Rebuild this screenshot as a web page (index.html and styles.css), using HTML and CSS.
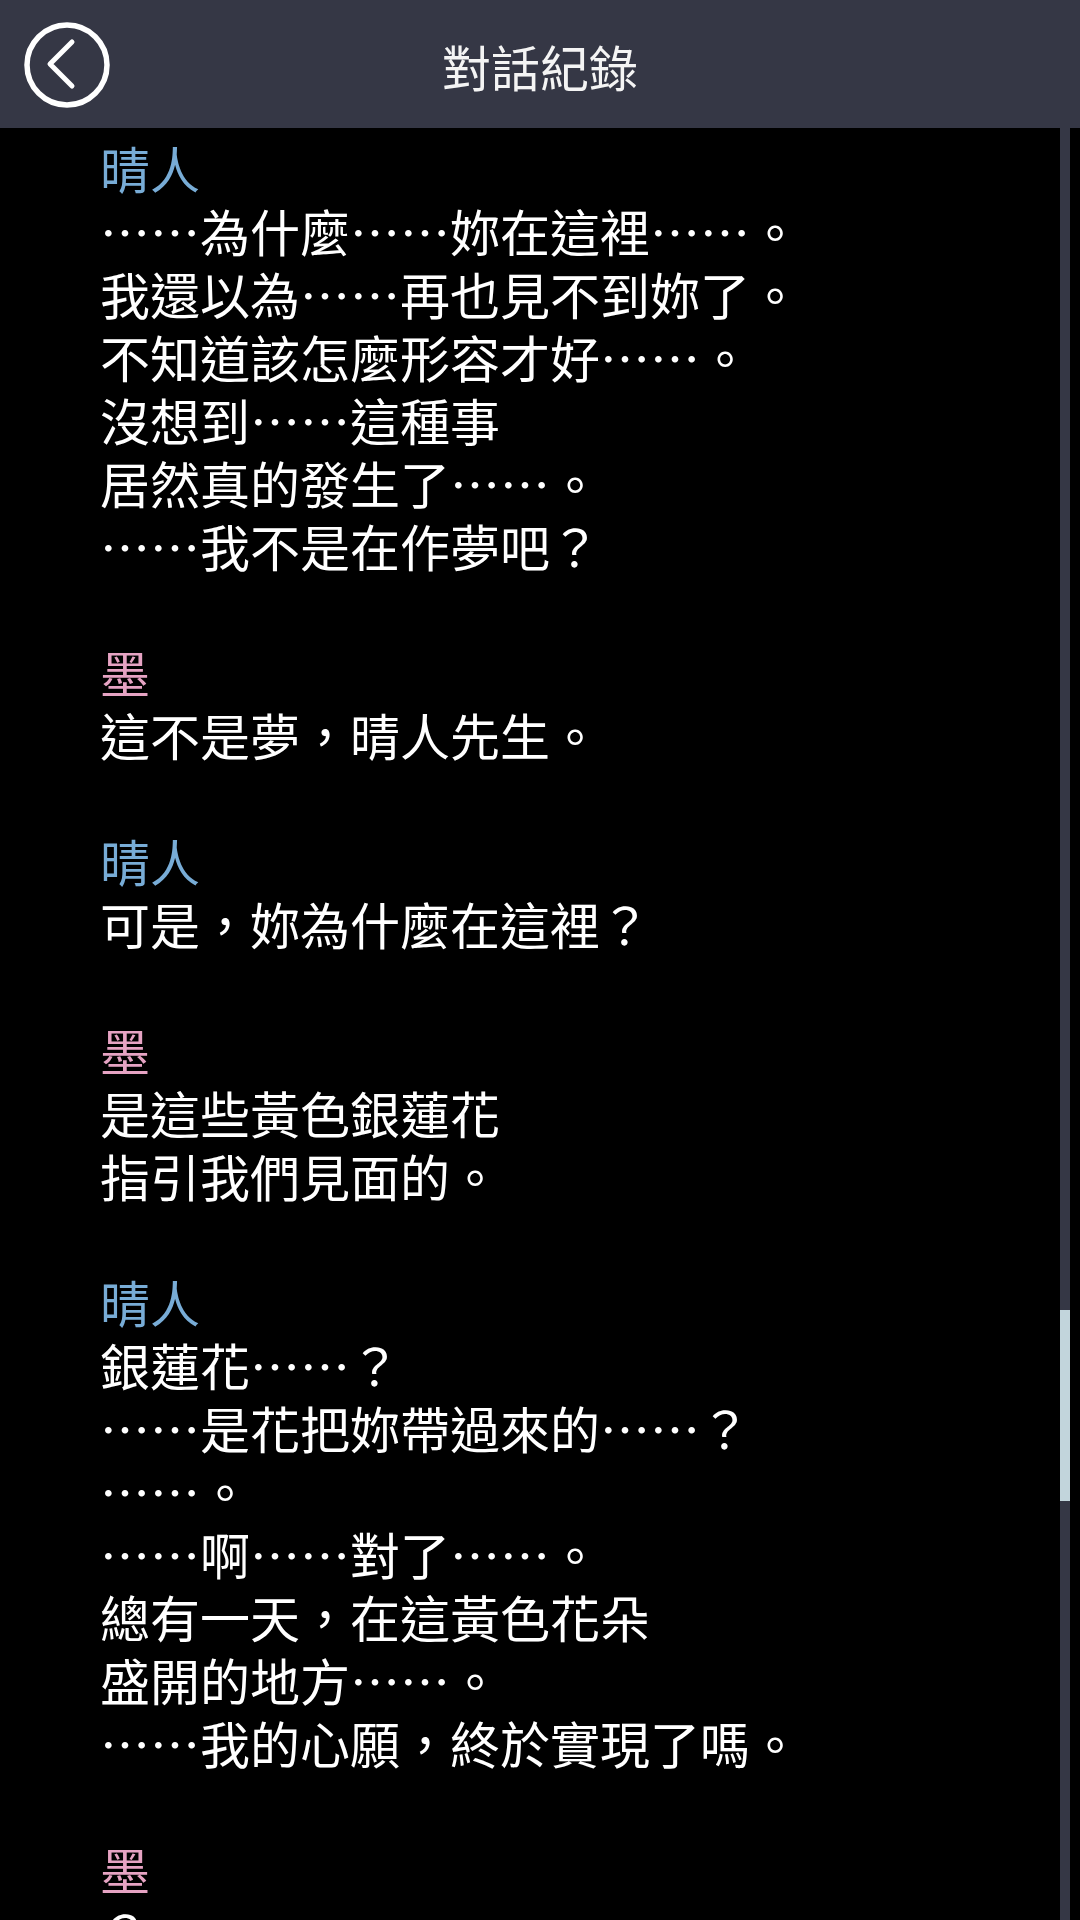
FILE: index.html
```html
<!DOCTYPE html>
<html lang="zh-Hant">
    <head>
        <meta charset="UTF-8">
        <title>對話紀錄</title>
        <link rel="stylesheet" href="styles.css">
    </head>
    <body>
        <div class="screen">
            <header class="topbar">
                <button class="back" type="button" aria-label="返回">
                    <svg width="90" height="90" viewBox="0 0 90 90">
                        <circle cx="45" cy="45" r="40" fill="none" stroke="#fff" stroke-width="5.5"/>
                        <polyline points="50,22 28,44 50,66" fill="none" stroke="#fff" stroke-width="5" stroke-linecap="round" stroke-linejoin="round"/>
                    </svg>
                </button>
                <h1 class="title">對話紀錄</h1>
                <div class="spacer"></div>
            </header>
            <div class="main">
                <div class="log">
                    <div class="entry">
                        <div class="name qing">晴人</div>
                        <p class="line">……為什麼……妳在這裡……。</p>
                        <p class="line">我還以為……再也見不到妳了。</p>
                        <p class="line">不知道該怎麼形容才好……。</p>
                        <p class="line">沒想到……這種事</p>
                        <p class="line">居然真的發生了……。</p>
                        <p class="line">……我不是在作夢吧？</p>
                    </div>
                    <div class="entry">
                        <div class="name mo">墨</div>
                        <p class="line">這不是夢，晴人先生。</p>
                    </div>
                    <div class="entry">
                        <div class="name qing">晴人</div>
                        <p class="line">可是，妳為什麼在這裡？</p>
                    </div>
                    <div class="entry">
                        <div class="name mo">墨</div>
                        <p class="line">是這些黃色銀蓮花</p>
                        <p class="line">指引我們見面的。</p>
                    </div>
                    <div class="entry">
                        <div class="name qing">晴人</div>
                        <p class="line">銀蓮花……？</p>
                        <p class="line">……是花把妳帶過來的……？</p>
                        <p class="line">……。</p>
                        <p class="line">……啊……對了……。</p>
                        <p class="line">總有一天，在這黃色花朵</p>
                        <p class="line">盛開的地方……。</p>
                        <p class="line">……我的心願，終於實現了嗎。</p>
                    </div>
                    <div class="entry">
                        <div class="name mo">墨</div>
                        <p class="line">？</p>
                    </div>
                </div>
                <div class="scroll-track">
                    <div class="scroll-thumb"></div>
                </div>
            </div>
        </div>
    </body>
</html>
```

FILE: styles.css
```css
html, body {
    margin : 0;
    padding : 0;
    background : #000;
}
body {
    font-family : "Noto Sans CJK TC", "Noto Sans CJK SC", sans-serif;
    color : #fff;
}
.screen {
    width : 1080px;
    height : 1920px;
    overflow : hidden;
    display : flex;
    flex-direction : column;
}
.topbar {
    height : 128px;
    flex : none;
    background : #353745;
    display : grid;
    grid-template-columns : 134px 1fr 134px;
    align-items : center;
}
.back {
    width : 90px;
    height : 90px;
    margin-left : 22px;
    margin-top : 2px;
    padding : 0;
    border : 0;
    background : none;
    display : flex;
}
.title {
    margin : 0;
    text-align : center;
    font-size : 49px;
    font-weight : 400;
    line-height : 1;
    color : #f4f4f4;
    margin-top : 2px;
}
.main {
    flex : 1;
    display : flex;
    overflow : hidden;
}
.log {
    flex : 1;
    padding : 8px 0 0 100px;
    font-size : 50px;
    line-height : 63px;
}
.entry {
    margin-bottom : 63px;
}
.line {
    margin : 0;
    white-space : nowrap;
}
.name.qing {
    color : #78acd6;
}
.name.mo {
    color : #e6a3c3;
}
.scroll-track {
    width : 10px;
    margin-right : 10px;
    flex : none;
    background : #353745;
}
.scroll-thumb {
    margin-top : 1182px;
    height : 191px;
    background : #c2d5dc;
}
```
